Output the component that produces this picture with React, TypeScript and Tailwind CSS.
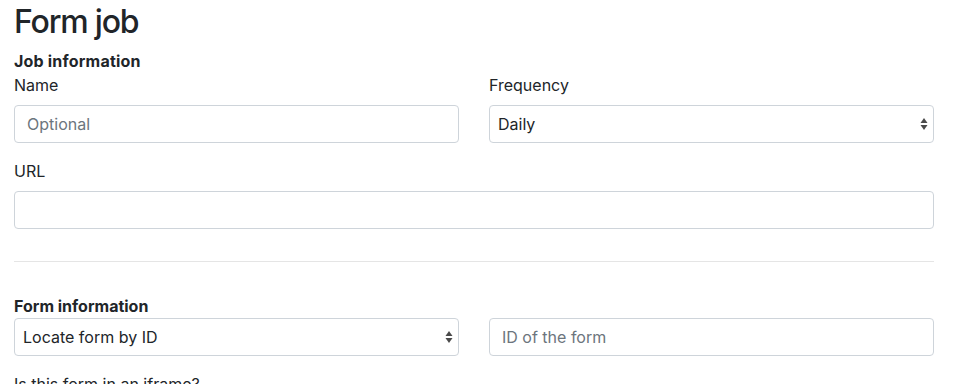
import React from "react";

function Arrows() {
  return (
    <svg width="8" height="14" viewBox="0 0 8 14" className="absolute right-[5px] top-1/2 -translate-y-1/2" aria-hidden>
      <path d="M4 1 L7.5 6 L0.5 6 Z" fill="#4a4a4a" />
      <path d="M4 13 L7.5 8 L0.5 8 Z" fill="#4a4a4a" />
    </svg>
  );
}

function Input({ placeholder }: { placeholder?: string }) {
  return (
    <div className="h-[38px] w-full rounded-[4px] border border-[#ced4da] bg-white px-3 flex items-center text-[16px]">
      {placeholder ? <span className="text-[#6c757d]">{placeholder}</span> : null}
    </div>
  );
}

function Select({ value }: { value: string }) {
  return (
    <div className="relative h-[38px] w-full rounded-[4px] border border-[#ced4da] bg-white pl-[8px] flex items-center text-[16px] text-[#495057]">
      <span className="text-[#212529]">{value}</span>
      <Arrows />
    </div>
  );
}

export default function App() {
  return (
    <div
      className="bg-white text-[#212529] pl-[14px] pr-[30px] text-[16px] leading-[24px] h-[384px] overflow-hidden"
      style={{ fontFamily: "Inter, 'Noto Sans', sans-serif" }}
    >
      <h2 className="pt-[3px] text-[32px] leading-[38px] font-medium tracking-[-1.2px] mb-[8px]">Form job</h2>
      <div className="font-bold tracking-[0.2px]">Job information</div>
      <div className="grid grid-cols-2 gap-x-[30px]">
        <div className="mb-4">
          <div className="mb-2">Name</div>
          <Input placeholder="Optional" />
        </div>
        <div className="mb-4">
          <div className="mb-2">Frequency</div>
          <Select value="Daily" />
        </div>
      </div>
      <div>
        <div className="mb-2">URL</div>
        <Input />
      </div>
      <hr className="mt-[32px] mb-[32px] border-0 border-t border-[rgba(0,0,0,0.1)]" />
      <div className="font-bold">Form information</div>
      <div className="grid grid-cols-2 gap-x-[30px]">
        <div className="mb-4">
          <Select value="Locate form by ID" />
        </div>
        <div className="mb-4">
          <Input placeholder="ID of the form" />
        </div>
      </div>
      <div>Is this form in an iframe?</div>
    </div>
  );
}
